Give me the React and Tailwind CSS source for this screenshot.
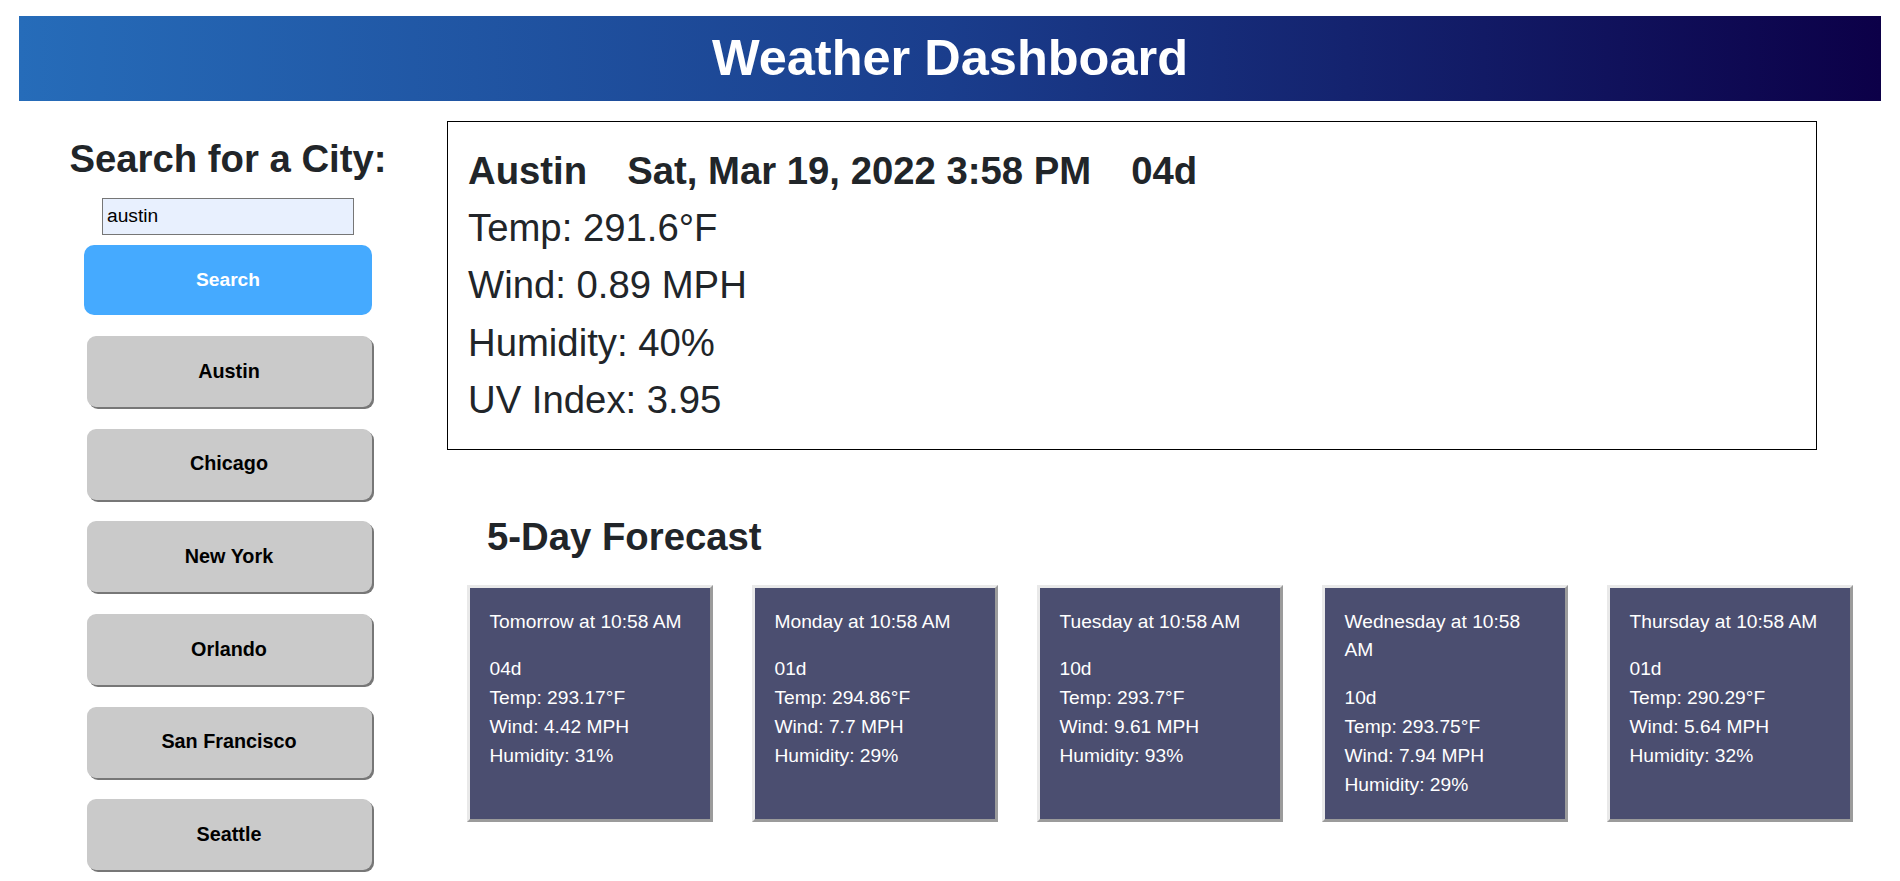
import React from "react";

const cities = ["Austin", "Chicago", "New York", "Orlando", "San Francisco", "Seattle"];

const forecast = [
  { title: "Tomorrow at 10:58 AM", icon: "04d", temp: "293.17", wind: "4.42", hum: "31" },
  { title: "Monday at 10:58 AM", icon: "01d", temp: "294.86", wind: "7.7", hum: "29" },
  { title: "Tuesday at 10:58 AM", icon: "10d", temp: "293.7", wind: "9.61", hum: "93" },
  { title: "Wednesday at 10:58 AM", icon: "10d", temp: "293.75", wind: "7.94", hum: "29" },
  { title: "Thursday at 10:58 AM", icon: "01d", temp: "290.29", wind: "5.64", hum: "32" },
];

export default function App() {
  return (
    <div className="min-h-screen bg-white font-['Liberation_Sans',Arial,sans-serif] text-[#212529]">
      <header className="mx-[19px] mt-[16px] h-[85px] flex items-center justify-center bg-[linear-gradient(to_right,#266cb9,#1a3d8c_50%,#0c0048)]">
        <h1 className="text-[50.5px] font-bold leading-[1.2] text-white">Weather Dashboard</h1>
      </header>

      <div className="flex">
        <aside className="w-[447px] shrink-0 pl-[9px] flex flex-col items-center">
          <h2 className="mt-[35px] text-[38.3px] font-bold leading-[1.2]">Search for a City:</h2>
          <input
            defaultValue="austin"
            className="mt-[16px] w-[252px] h-[37px] border border-[#767676] bg-[#e8f0fe] px-[4px] text-[19.2px] text-black outline-none"
          />
          <button className="mt-[10px] w-[288px] h-[70px] rounded-[10px] bg-[#45aaff] text-white font-bold text-[19.2px]">
            Search
          </button>
          <div className="mt-[21px] flex flex-col gap-[21.7px] pl-[2px]">
            {cities.map((c) => (
              <button
                key={c}
                className="w-[285px] h-[71px] rounded-[9px] bg-[#cacaca] shadow-[2px_2px_0_#777] text-black font-bold text-[19.8px]"
              >
                {c}
              </button>
            ))}
          </div>
        </aside>

        <main className="w-[1425px] shrink-0">
          <section className="mt-[19.5px] w-[1370px] border border-black p-[20px] text-[38.3px] leading-[1.5]">
            <div className="font-bold">
              <span>Austin</span>
              <span className="ml-[40px]">Sat, Mar 19, 2022 3:58 PM</span>
              <span className="ml-[40px]">04d</span>
            </div>
            <div>Temp: 291.6°F</div>
            <div>Wind: 0.89 MPH</div>
            <div>Humidity: 40%</div>
            <div>UV Index: 3.95</div>
          </section>

          <h2 className="mt-[64px] pl-[40px] text-[38.3px] font-bold leading-[1.2]">5-Day Forecast</h2>

          <div className="mt-[25px] flex justify-around">
            {forecast.map((f) => (
              <div
                key={f.title}
                className="w-[246px] border-[3px] border-t-[#e9e9e9] border-l-[#e9e9e9] border-b-[#9b9b9b] border-r-[#9b9b9b] bg-[#4b4e70] p-[20px] text-white text-[19.2px] leading-[1.5]"
              >
                <div className="mb-[19px]">{f.title}</div>
                <div>{f.icon}</div>
                <div>Temp: {f.temp}°F</div>
                <div>Wind: {f.wind} MPH</div>
                <div>Humidity: {f.hum}%</div>
              </div>
            ))}
          </div>
        </main>
      </div>
    </div>
  );
}
